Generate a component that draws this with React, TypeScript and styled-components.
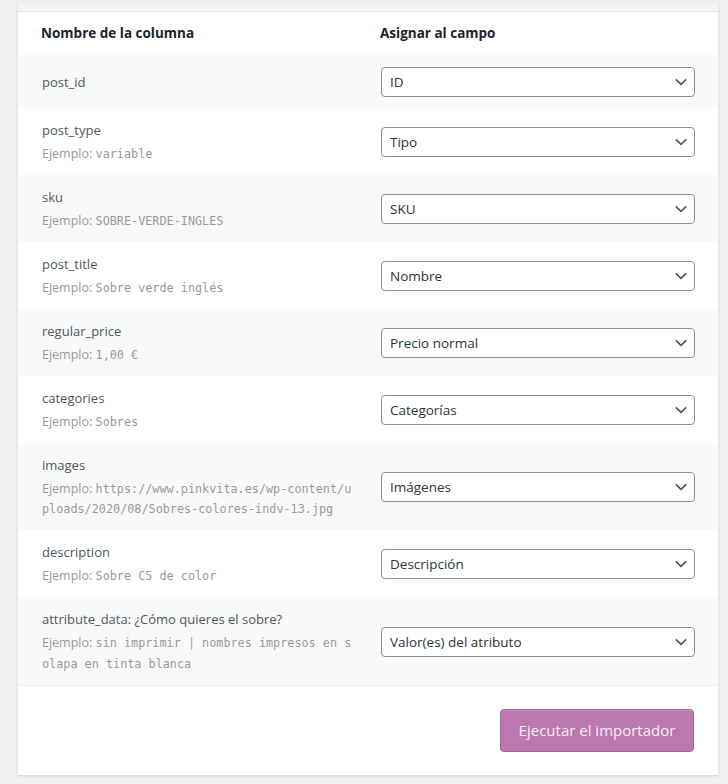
import styled, { createGlobalStyle } from "styled-components";

const GlobalStyle = createGlobalStyle`
  body {
    margin: 0;
    background: #f0f0f1;
    font-family: "Open Sans", "Noto Sans", sans-serif;
    color: #50575e;
  }
`;

const Page = styled.div`
  padding: 0 10px 9px 18px;
`;

const Card = styled.div`
  background: #ffffff;
  box-shadow: 0 1px 3px rgba(0, 0, 0, 0.13);
`;

const TopFade = styled.div`
  height: 11px;
  background: linear-gradient(#ececed, #f8f8f8);
  border-bottom: 1px solid #e8e8e8;
`;

const Table = styled.table`
  width: 100%;
  border-collapse: collapse;
  table-layout: fixed;
`;

const HeadCell = styled.th`
  text-align: left;
  padding: 12px 24px 12px 23px;
  font-size: 13.5px;
  line-height: 19px;
  font-weight: 700;
  color: #1d2327;
`;

const Row = styled.tr<{ $striped: boolean }>`
  background: ${(p) => (p.$striped ? "#f9f9f9" : "#ffffff")};
`;

const NameCell = styled.td`
  padding: 12px 0 10.5px 24px;
  vertical-align: middle;
  font-size: 13px;
  line-height: 20px;
  color: #50575e;
`;

const Example = styled.span`
  display: block;
  margin-top: 4px;
  font-size: 12.5px;
  line-height: 20.5px;
  color: #999999;
  word-break: break-all;
`;

const Code = styled.code`
  font-family: "DejaVu Sans Mono", "Liberation Mono", monospace;
  font-size: 11.8px;
  line-height: 14px;
  color: #999999;
`;

const FieldCell = styled.td`
  padding: 12px 23px 10.5px 24px;
  vertical-align: middle;
`;

const SelectBox = styled.div`
  display: flex;
  align-items: center;
  justify-content: space-between;
  box-sizing: border-box;
  height: 30px;
  width: 314px;
  padding: 0 7px 0 8px;
  border: 1px solid #8c8f94;
  border-radius: 4px;
  background: #ffffff;
  font-size: 13.5px;
  color: #2c3338;
`;

const Footer = styled.div`
  display: flex;
  justify-content: flex-end;
  padding: 23px 24px;
  border-top: 1px solid #ececec;
`;

const RunButton = styled.button`
  height: 43px;
  width: 194px;
  padding: 0;
  border: 1px solid #a36597;
  border-radius: 4px;
  background: #bb77ae;
  box-shadow: inset 0 1px 0 rgba(255, 255, 255, 0.2);
  color: #f7eef5;
  font-family: "Open Sans", "Noto Sans", sans-serif;
  font-size: 15px;
  white-space: nowrap;
  cursor: pointer;
`;

const Chevron = () => (
  <svg width="12" height="8" viewBox="0 0 12 8" aria-hidden="true">
    <path d="M0.8 1.3 L6 6.4 L11.2 1.3" fill="none" stroke="#50575e" strokeWidth="1.7" />
  </svg>
);

type Mapping = { name: string; example?: string; field: string };

const mappings: Mapping[] = [
  { name: "post_id", field: "ID" },
  { name: "post_type", example: "variable", field: "Tipo" },
  { name: "sku", example: "SOBRE-VERDE-INGLES", field: "SKU" },
  { name: "post_title", example: "Sobre verde inglés", field: "Nombre" },
  { name: "regular_price", example: "1,00 €", field: "Precio normal" },
  { name: "categories", example: "Sobres", field: "Categorías" },
  {
    name: "images",
    example: "https://www.pinkvita.es/wp-content/uploads/2020/08/Sobres-colores-indv-13.jpg",
    field: "Imágenes",
  },
  { name: "description", example: "Sobre C5 de color", field: "Descripción" },
  {
    name: "attribute_data: ¿Cómo quieres el sobre?",
    example: "sin imprimir | nombres impresos en solapa en tinta blanca",
    field: "Valor(es) del atributo",
  },
];

export default function App() {
  return (
    <>
      <GlobalStyle />
      <Page>
        <Card>
          <TopFade />
          <Table>
            <colgroup>
              <col style={{ width: 339 }} />
              <col />
            </colgroup>
            <thead>
              <tr>
                <HeadCell>Nombre de la columna</HeadCell>
                <HeadCell>Asignar al campo</HeadCell>
              </tr>
            </thead>
            <tbody>
              {mappings.map((m, i) => (
                <Row key={m.name} $striped={i % 2 === 0}>
                  <NameCell>
                    {m.name}
                    {m.example && (
                      <Example>
                        Ejemplo: <Code>{m.example}</Code>
                      </Example>
                    )}
                  </NameCell>
                  <FieldCell>
                    <SelectBox>
                      <span>{m.field}</span>
                      <Chevron />
                    </SelectBox>
                  </FieldCell>
                </Row>
              ))}
            </tbody>
          </Table>
          <Footer>
            <RunButton>Ejecutar el importador</RunButton>
          </Footer>
        </Card>
      </Page>
    </>
  );
}
